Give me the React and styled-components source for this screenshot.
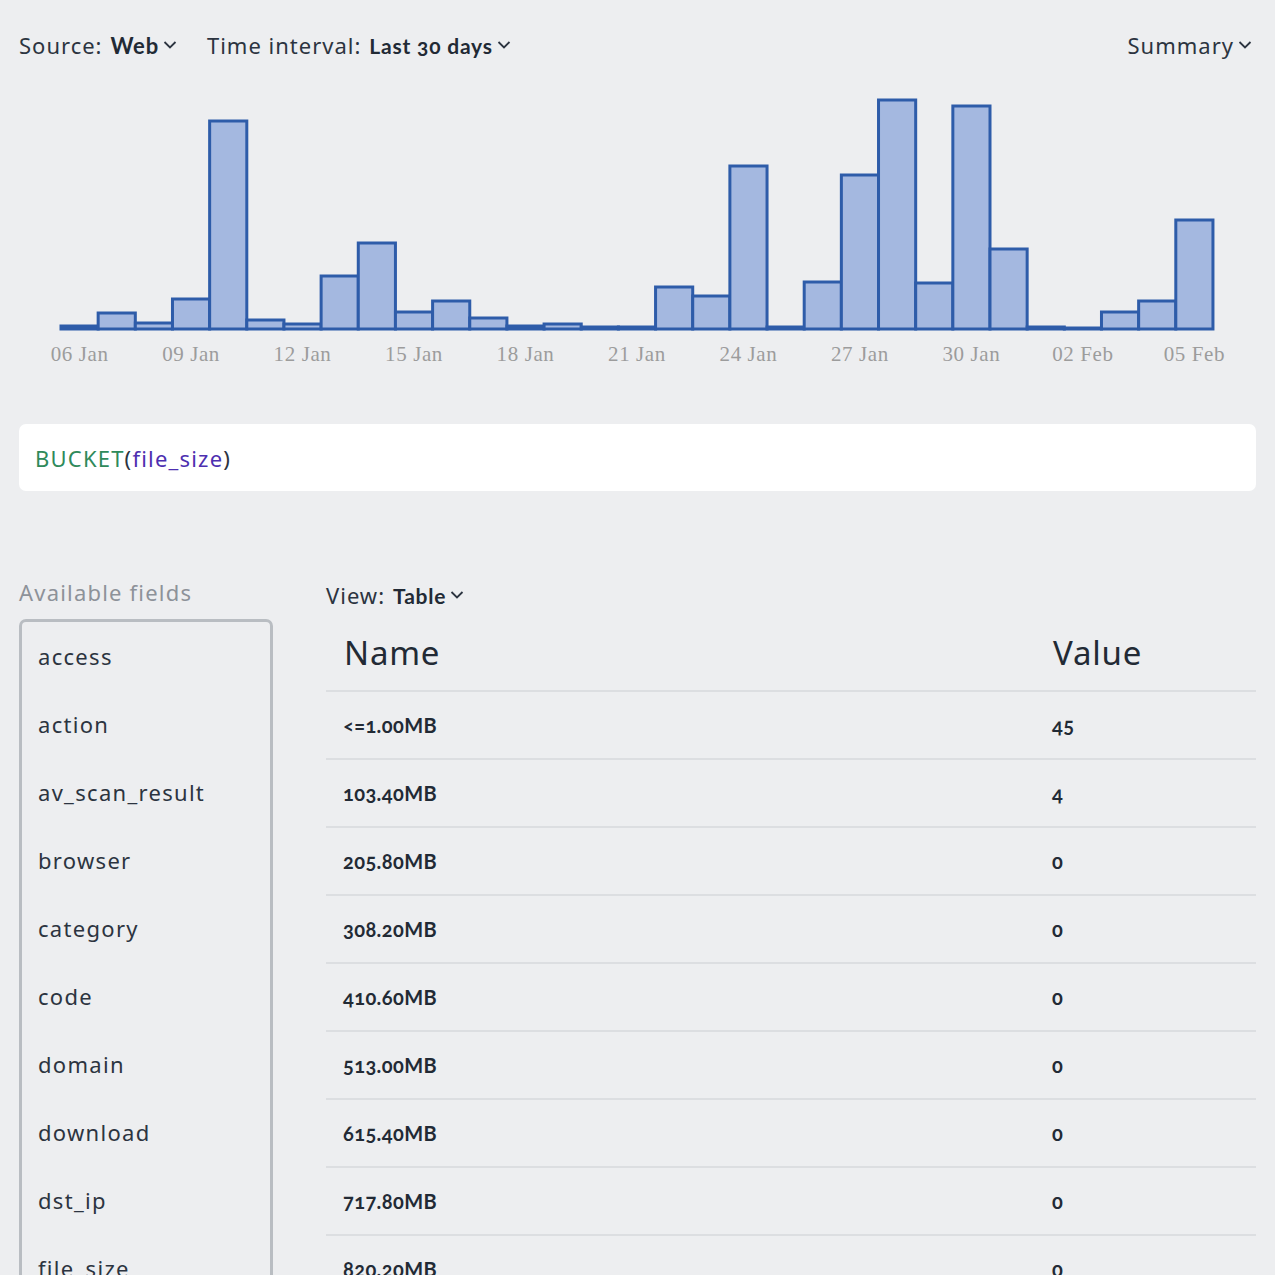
import React from 'react';
import styled, { createGlobalStyle } from 'styled-components';

const GlobalStyle = createGlobalStyle`
  html, body {
    margin: 0;
    padding: 0;
    background: #edeef0;
  }
  body {
    font-family: "Noto Sans", "Open Sans", sans-serif;
    color: #2c3440;
  }
`;

const bars = [3, 16, 6, 30, 208, 9, 5, 53, 86, 17, 28, 11, 3, 5, 2, 2, 42, 33, 163, 2, 47, 154, 229, 46, 223, 80, 2, 1, 17, 28, 109];
const labels = ['06 Jan', '09 Jan', '12 Jan', '15 Jan', '18 Jan', '21 Jan', '24 Jan', '27 Jan', '30 Jan', '02 Feb', '05 Feb'];

const fields = ['access', 'action', 'av_scan_result', 'browser', 'category', 'code', 'domain', 'download', 'dst_ip', 'file_size'];

const rows = [
  ['<=1.00MB', '45'],
  ['103.40MB', '4'],
  ['205.80MB', '0'],
  ['308.20MB', '0'],
  ['410.60MB', '0'],
  ['513.00MB', '0'],
  ['615.40MB', '0'],
  ['717.80MB', '0'],
  ['820.20MB', '0'],
];

const Page = styled.div`
  padding: 0 19px 0 19px;
  height: 1275px;
  overflow: hidden;
  box-sizing: border-box;
`;

const Toolbar = styled.div`
  display: flex;
  align-items: center;
  height: 90px;
  gap: 30px;
`;

const Picker = styled.div`
  display: flex;
  align-items: center;
  font-size: 22px;
  letter-spacing: 1px;
  color: #2c3440;
  margin-left: ${(p) => (p.right ? 'auto' : '0')};
  padding-right: ${(p) => (p.right ? '4px' : '0')};
  white-space: nowrap;
`;

const Strong = styled.span`
  font-family: Lato, "Noto Sans", sans-serif;
  font-weight: 700;
  font-size: ${(p) => p.size || 21}px;
  letter-spacing: 0.8px;
  margin-left: 8px;
  font-variant-numeric: oldstyle-nums;
  color: #222a35;
`;

const Chevron = () => (
  <svg width="14" height="10" viewBox="0 0 14 10" style={{ marginLeft: 4 }}>
    <polyline points="1.5,2 7,7.5 12.5,2" fill="none" stroke="#2c3440" strokeWidth="1.8" />
  </svg>
);

const ChartWrap = styled.div`
  height: 300px;
`;

const Chart = () => {
  const x0 = 42;
  const w = 37.16;
  const base = 239;
  return (
    <svg width="1237" height="300" viewBox="0 0 1237 300">
      {bars.map((h, i) => (
        <rect
          key={i}
          x={x0 + i * w}
          y={base - h}
          width={w}
          height={h}
          fill="#a4b8e0"
          stroke="#2e5ca9"
          strokeWidth="3"
        />
      ))}
      {labels.map((l, i) => (
        <text
          key={l}
          x={x0 + i * 3 * w + w / 2}
          y={271}
          textAnchor="middle"
          fontFamily='"Liberation Serif", serif'
          fontSize="21"
          letterSpacing="0.6"
          fill="#9c9c9c"
        >
          {l}
        </text>
      ))}
    </svg>
  );
};

const QueryBox = styled.div`
  margin-top: 34px;
  background: #ffffff;
  border-radius: 7px;
  height: 67px;
  display: flex;
  align-items: center;
  padding-left: 16px;
  font-size: 22px;
  letter-spacing: 1.2px;
  color: #2c3440;
`;

const Fn = styled.span`
  color: #2f8a5b;
`;

const Arg = styled.span`
  color: #4d2fb0;
`;

const Lower = styled.div`
  display: flex;
  gap: 53px;
  margin-top: 84px;
`;

const Sidebar = styled.div`
  width: 254px;
  flex-shrink: 0;
`;

const SideTitle = styled.div`
  font-size: 22px;
  letter-spacing: 1.2px;
  color: #8d9299;
  height: 44px;
  line-height: 34px;
`;

const FieldBox = styled.div`
  border: 3px solid #b9bdc2;
  border-radius: 7px;
  height: 800px;
`;

const Field = styled.div`
  height: 68px;
  display: flex;
  align-items: center;
  padding-left: 16px;
  font-size: 22px;
  letter-spacing: 1.3px;
  color: #2c3440;
`;

const Main = styled.div`
  flex: 1;
`;

const ViewBar = styled.div`
  height: 40px;
  display: flex;
  align-items: center;
`;

const Row = styled.div`
  display: grid;
  grid-template-columns: 709px 1fr;
  height: ${(p) => (p.head ? 75 : 66)}px;
  align-items: center;
  border-bottom: 2px solid #dcdee1;
`;

const HeadCell = styled.div`
  font-size: 33px;
  padding-left: 18px;
  color: #222a35;
  letter-spacing: 0.8px;
`;

const Cell = styled.div`
  font-family: Lato, "Noto Sans", sans-serif;
  font-weight: 700;
  font-size: 20px;
  letter-spacing: 0.4px;
  padding-left: 17px;
  color: #222a35;
  font-variant-numeric: oldstyle-nums;
`;

export default function App() {
  return (
    <Page>
      <GlobalStyle />
      <Toolbar>
        <Picker>
          Source:<Strong size={22}>Web</Strong>
          <Chevron />
        </Picker>
        <Picker>
          Time interval:<Strong>Last 30 days</Strong>
          <Chevron />
        </Picker>
        <Picker right>
          Summary
          <Chevron />
        </Picker>
      </Toolbar>
      <ChartWrap>
        <Chart />
      </ChartWrap>
      <QueryBox>
        <Fn>BUCKET</Fn>(<Arg>file_size</Arg>)
      </QueryBox>
      <Lower>
        <Sidebar>
          <SideTitle>Available fields</SideTitle>
          <FieldBox>
            {fields.map((f) => (
              <Field key={f}>{f}</Field>
            ))}
          </FieldBox>
        </Sidebar>
        <Main>
          <ViewBar>
            <Picker>
              View:<Strong>Table</Strong>
              <Chevron />
            </Picker>
          </ViewBar>
          <Row head>
            <HeadCell>Name</HeadCell>
            <HeadCell>Value</HeadCell>
          </Row>
          {rows.map(([n, v]) => (
            <Row key={n}>
              <Cell>{n}</Cell>
              <Cell>{v}</Cell>
            </Row>
          ))}
        </Main>
      </Lower>
    </Page>
  );
}
